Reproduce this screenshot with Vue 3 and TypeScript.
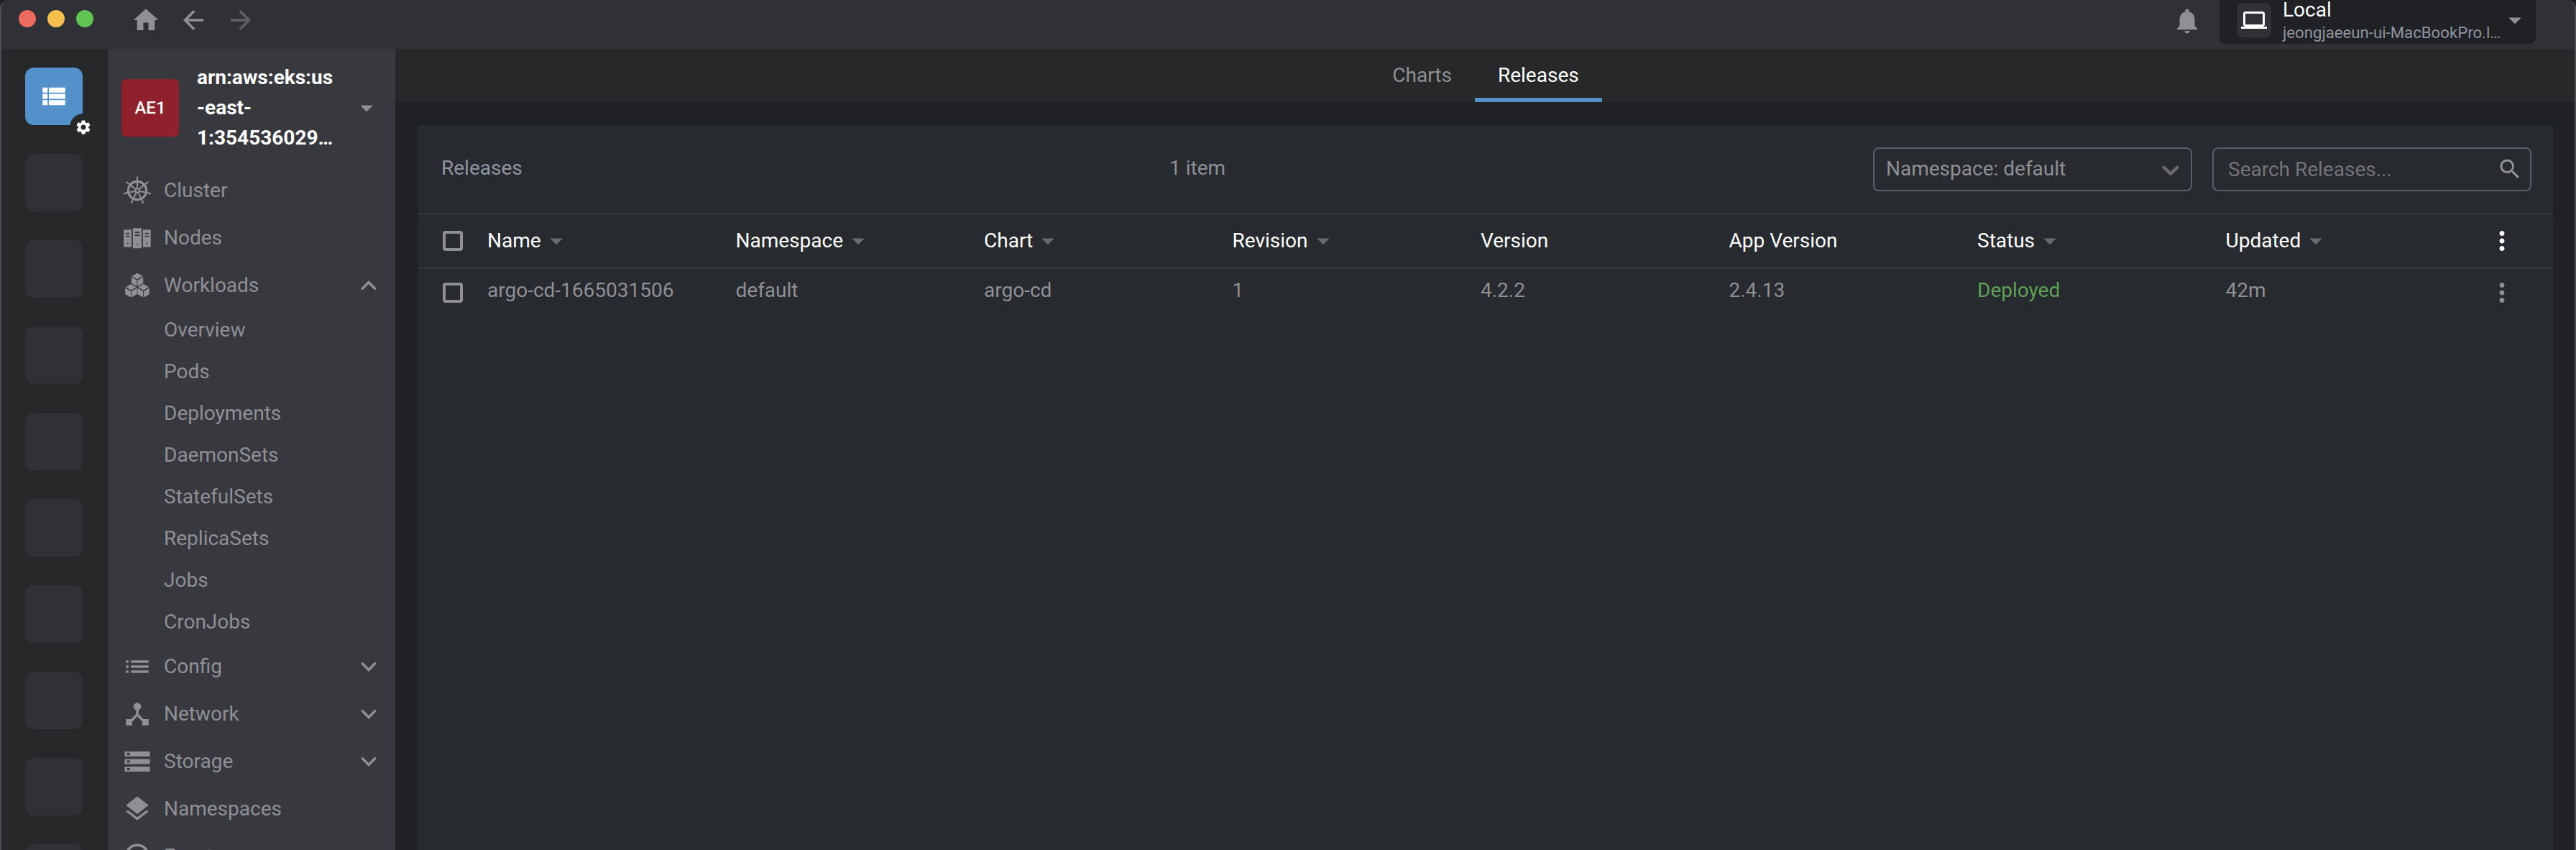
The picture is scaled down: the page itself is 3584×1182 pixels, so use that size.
<script setup lang="ts">
interface NavItem { label: string; icon: string; chevron?: 'up' | 'down'; children?: string[] }

const ICONS: Record<string, string> = {
  home: 'M10 20v-6h4v6h5v-8h3L12 3 2 12h3v8z',
  back: 'M20 11H7.83l5.59-5.59L12 4l-8 8 8 8 1.41-1.41L7.83 13H20v-2z',
  forward: 'M12 4l-1.41 1.41L16.17 11H4v2h12.17l-5.58 5.59L12 20l8-8z',
  bell: 'M12 22c1.1 0 2-.9 2-2h-4c0 1.1.89 2 2 2zm6-6v-5c0-3.07-1.64-5.64-4.5-6.32V4c0-.83-.67-1.5-1.5-1.5s-1.5.67-1.5 1.5v.68C7.63 5.36 6 7.92 6 11v5l-2 2v1h16v-1l-2-2z',
  laptop: 'M20 18c1.1 0 1.99-.9 1.99-2L22 6c0-1.1-.9-2-2-2H4c-1.1 0-2 .9-2 2v10c0 1.1.9 2 2 2H0v2h24v-2h-4zM4 6h16v10H4V6z',
  viewList: 'M3 14h4v-4H3v4zm0 5h4v-4H3v4zM3 9h4V5H3v4zm5 5h13v-4H8v4zm0 5h13v-4H8v4zM8 5v4h13V5H8z',
  gear: 'M19.14 12.94c.04-.3.06-.61.06-.94 0-.32-.02-.64-.07-.94l2.03-1.58c.18-.14.23-.41.12-.61l-1.92-3.32c-.12-.22-.37-.29-.59-.22l-2.39.96c-.5-.38-1.03-.7-1.62-.94l-.36-2.54c-.04-.24-.24-.41-.48-.41h-3.84c-.24 0-.43.17-.47.41l-.36 2.54c-.59.24-1.13.57-1.62.94l-2.39-.96c-.22-.08-.47 0-.59.22L2.74 8.87c-.12.21-.08.47.12.61l2.03 1.58c-.05.3-.09.63-.09.94s.02.64.07.94l-2.03 1.58c-.18.14-.23.41-.12.61l1.92 3.32c.12.22.37.29.59.22l2.39-.96c.5.38 1.03.7 1.62.94l.36 2.54c.05.24.24.41.48.41h3.84c.24 0 .44-.17.47-.41l.36-2.54c.59-.24 1.13-.56 1.62-.94l2.39.96c.22.08.47 0 .59-.22l1.92-3.32c.12-.22.07-.47-.12-.61l-2.01-1.58zM12 15.6c-1.98 0-3.6-1.62-3.6-3.6s1.62-3.6 3.6-3.6 3.6 1.62 3.6 3.6-1.62 3.6-3.6 3.6z',
  drop: 'M7 10l5 5 5-5z',
  up: 'M7 14.5L12 9.4l5 5.1',
  down: 'M7 9.5l5 5.1 5-5.1',
  list: 'M3 13h2v-2H3v2zm0 4h2v-2H3v2zm0-8h2V7H3v2zm4 4h14v-2H7v2zm0 4h14v-2H7v2zM7 7v2h14V7H7z',
  hub: 'M17 16l-4-4V8.82C14.16 8.4 15 7.3 15 6c0-1.66-1.34-3-3-3S9 4.34 9 6c0 1.3.84 2.4 2 2.82V12l-4 4H3v5h5v-3.05l4-4.2 4 4.2V21h5v-5h-4z',
  storage: 'M2 20h20v-4H2v4zm2-3h2v2H4v-2zM2 4v4h20V4H2zm4 3H4V5h2v2zm-4 7h20v-4H2v4zm2-3h2v2H4v-2z',
  layers: 'M11.99 18.54l-7.37-5.73L3 14.07l9 7 9-7-1.63-1.27-7.38 5.74zM12 16l7.36-5.73L21 9l-9-7-9 7 1.63 1.27L12 16z',
  clock: 'M11.99 2C6.47 2 2 6.48 2 12s4.47 10 9.99 10C17.52 22 22 17.52 22 12S17.52 2 11.99 2zM12 20c-4.42 0-8-3.58-8-8s3.58-8 8-8 8 3.58 8 8-3.58 8-8 8zm.5-13H11v6l5.25 3.15.75-1.23-4.5-2.67z',
  nodes: 'M1.2 5.4h6.2v13.7H1.2zM2.7 7.8v1.1h3.2V7.8zm0 2.3v1.1h3.2v-1.1zM4 15.6v1.2h.9v-1.2zM8.5 4.2h6.9v15.9H8.5zM10 7v1.1h3.9V7zm0 2.3v1.1h3.9V9.3zM11.5 16.4v1.1h1v-1.1zM16.5 5.4h6.2v13.7h-6.2zM18 7.8v1.1h3.2V7.8zm0 2.3v1.1h3.2v-1.1zM19.1 15.6v1.2h.9v-1.2z',
  cubes: 'M12 2.2l4.2 2.4L12 7 7.8 4.6zM7.3 5.3l4.4 2.5v4.7l-4.4-2.3zM16.7 5.3l-4.4 2.5v4.7l4.4-2.3zM7.1 10.9l4.2 2.4-4.2 2.4-4.2-2.4zM2.4 14l4.4 2.5v4.9l-4.4-2.6zM11.8 14l-4.4 2.5v4.9l4.4-2.6zM16.9 10.9l4.2 2.4-4.2 2.4-4.2-2.4zM12.2 14l4.4 2.5v4.9l-4.4-2.6zM21.6 14l-4.4 2.5v4.9l4.4-2.6z',
  search: 'M15.5 14h-.79l-.28-.27C15.41 12.59 16 11.11 16 9.5 16 5.91 13.09 3 9.5 3S3 5.91 3 9.5 5.91 16 9.5 16c1.61 0 3.09-.59 4.23-1.57l.27.28v.79l5 4.99L20.49 19l-4.99-5zm-6 0C7.01 14 5 11.99 5 9.5S7.01 5 9.5 5 14 7.01 14 9.5 11.99 14 9.5 14z',
  more: 'M12 8c1.1 0 2-.9 2-2s-.9-2-2-2-2 .9-2 2 .9 2 2 2zm0 2c-1.1 0-2 .9-2 2s.9 2 2 2 2-.9 2-2-.9-2-2-2zm0 6c-1.1 0-2 .9-2 2s.9 2 2 2 2-.9 2-2-.9-2-2-2z',
}

const SPOKES = [0, 1, 2, 3, 4, 5, 6].map((i) => (i * 360) / 7)

const nav: NavItem[] = [
  { label: 'Cluster', icon: 'wheel' },
  { label: 'Nodes', icon: 'nodes' },
  {
    label: 'Workloads', icon: 'cubes', chevron: 'up',
    children: ['Overview', 'Pods', 'Deployments', 'DaemonSets', 'StatefulSets', 'ReplicaSets', 'Jobs', 'CronJobs'],
  },
  { label: 'Config', icon: 'list', chevron: 'down' },
  { label: 'Network', icon: 'hub', chevron: 'down' },
  { label: 'Storage', icon: 'storage', chevron: 'down' },
  { label: 'Namespaces', icon: 'layers' },
  { label: 'Events', icon: 'clock' },
]

const columns = [
  { title: 'Name', value: 'argo-cd-1665031506', sortable: true },
  { title: 'Namespace', value: 'default', sortable: true },
  { title: 'Chart', value: 'argo-cd', sortable: true },
  { title: 'Revision', value: '1', sortable: true },
  { title: 'Version', value: '4.2.2', sortable: false },
  { title: 'App Version', value: '2.4.13', sortable: false },
  { title: 'Status', value: 'Deployed', sortable: true },
  { title: 'Updated', value: '42m', sortable: true },
]
</script>

<template>
  <div class="window">
    <header class="topbar">
      <div class="lights"><i class="red" /><i class="yellow" /><i class="green" /></div>
      <div class="history">
        <svg class="icon" viewBox="0 0 24 24"><path :d="ICONS.home" /></svg>
        <svg class="icon" viewBox="0 0 24 24"><path :d="ICONS.back" /></svg>
        <svg class="icon disabled" viewBox="0 0 24 24"><path :d="ICONS.forward" /></svg>
      </div>
      <svg class="icon bell" viewBox="0 0 24 24"><path :d="ICONS.bell" /></svg>
      <div class="space">
        <div class="space-icon"><svg viewBox="0 0 24 24"><path :d="ICONS.laptop" /></svg></div>
        <div class="space-text">
          <div class="space-name">Local</div>
          <div class="space-host">jeongjaeeun-ui-MacBookPro.l…</div>
        </div>
        <svg class="icon" viewBox="0 0 24 24"><path :d="ICONS.drop" /></svg>
      </div>
    </header>

    <div class="body">
      <aside class="rail">
        <div class="tile active">
          <svg class="icon" viewBox="0 0 24 24"><path :d="ICONS.viewList" /></svg>
          <span class="badge"><svg viewBox="0 0 24 24"><path :d="ICONS.gear" /></svg></span>
        </div>
        <div v-for="n in 9" :key="n" class="tile" />
      </aside>

      <nav class="sidebar">
        <div class="cluster">
          <div class="avatar">AE1</div>
          <div class="cluster-name">arn:aws:eks:us<br>-east-<br>1:354536029…</div>
          <svg class="icon" viewBox="0 0 24 24"><path :d="ICONS.drop" /></svg>
        </div>
        <template v-for="item in nav" :key="item.label">
          <div class="item">
            <svg v-if="item.icon === 'wheel'" class="icon wheel" viewBox="-12 -12 24 24">
              <circle r="7.2" stroke-width="1.8" />
              <circle r="1.6" stroke-width="1.2" />
              <path v-for="a in SPOKES" :key="a" d="M0-1.8V-11.2" stroke-width="1.2" :transform="`rotate(${a})`" />
            </svg>
            <svg v-else class="icon" viewBox="0 0 24 24"><path fill-rule="evenodd" :d="ICONS[item.icon]" /></svg>
            <span class="label">{{ item.label }}</span>
            <svg v-if="item.chevron" class="icon chevron" viewBox="0 0 24 24"><path :d="ICONS[item.chevron]" /></svg>
          </div>
          <div v-for="child in item.children" :key="child" class="sub">{{ child }}</div>
        </template>
      </nav>

      <main class="main">
        <div class="tabs">
          <div class="tab">Charts</div>
          <div class="tab current">Releases</div>
        </div>
        <section class="panel">
          <div class="toolbar">
            <span class="title">Releases</span>
            <span class="count">1 item</span>
            <div class="select">
              <span>Namespace: default</span>
              <svg viewBox="0 0 20 20"><path d="M4.516 7.548c.436-.446 1.043-.481 1.576 0L10 11.295l3.908-3.747c.533-.481 1.141-.446 1.574 0 .436.445.408 1.197 0 1.615-.406.418-4.695 4.502-4.695 4.502-.217.223-.502.335-.787.335s-.57-.112-.789-.335c0 0-4.287-4.084-4.695-4.502s-.436-1.17 0-1.615z" /></svg>
            </div>
            <div class="search">
              <span>Search Releases...</span>
              <svg viewBox="0 0 24 24"><path :d="ICONS.search" /></svg>
            </div>
          </div>
          <div class="row head">
            <i class="check" />
            <div v-for="c in columns" :key="c.title" class="cell">
              {{ c.title }}<svg v-if="c.sortable" class="icon sort" viewBox="0 0 24 24"><path :d="ICONS.drop" /></svg>
            </div>
            <svg class="icon more" viewBox="0 0 24 24"><path :d="ICONS.more" /></svg>
          </div>
          <div class="row">
            <i class="check" />
            <div v-for="c in columns" :key="c.title" class="cell value" :class="{ ok: c.title === 'Status' }">{{ c.value }}</div>
            <svg class="icon more" viewBox="0 0 24 24"><path :d="ICONS.more" /></svg>
          </div>
        </section>
      </main>
    </div>
  </div>
</template>

<style>
body { background: #202124; overflow: hidden; }
</style>

<style scoped>
* { box-sizing: border-box; }
.window {
  width: 3584px; height: 1182px; overflow: hidden;
  display: flex; flex-direction: column;
  border-left: 2px solid #4d4e51; border-right: 2px solid #4d4e51;
  border-radius: 12px 12px 0 0;
  background: #202124; color: #8e9095;
  font: 28px/42px Roboto, sans-serif;
}
svg { display: block; flex: none; fill: currentColor; }
.icon { width: 42px; height: 42px; }

.topbar { height: 68px; flex: none; display: flex; align-items: flex-start; background: #303136; }
.lights { display: flex; gap: 16px; padding: 14px 0 0 24px; }
.lights i { width: 24px; height: 24px; border-radius: 50%; }
.red { background: #ec6a5e; }
.yellow { background: #f4bf4f; }
.green { background: #61c554; }
.history { display: flex; gap: 24px; margin: 7px 0 0 52px; }
.disabled { opacity: .5; }
.bell { margin: 8px 24px 0 auto; }
.space {
  width: 440px; height: 61px; margin-right: 54px; padding-left: 24px;
  display: flex; background: #202124; border-radius: 0 0 8px 8px;
}
.space-icon { width: 48px; height: 48px; margin-top: 4px; border-radius: 8px; background: #303136; color: #fff; display: flex; align-items: center; justify-content: center; }
.space-icon svg { width: 36px; height: 36px; }
.space-text { width: 302px; margin-left: 16px; white-space: nowrap; }
.space-name { color: #fff; line-height: 28px; height: 28px; }
.space-host { color: #8f95a0; font-size: 22.2px; line-height: 26px; margin-top: 4px; }
.space .icon { margin: 7px 0 0 0; }

.body { flex: 1; min-height: 0; display: flex; }
.rail { width: 148px; flex: none; padding: 26px 0 0 33px; background: #262829; display: flex; flex-direction: column; gap: 40px; }
.tile { width: 80px; height: 80px; flex: none; border-radius: 12px; background: #303136; }
.tile.active { position: relative; background: #5490ca; color: #fff; display: flex; align-items: center; justify-content: center; }
.badge { position: absolute; left: 62px; top: 64px; width: 38px; height: 38px; border-radius: 50%; background: #262829; display: flex; align-items: center; justify-content: center; }
.badge svg { width: 24px; height: 24px; }

.sidebar { width: 400px; flex: none; background: #38393e; }
.cluster { height: 164px; display: flex; align-items: center; padding: 0 19px; }
.avatar { width: 80px; height: 80px; border-radius: 6px; background: #8e212b; color: #fff; font-size: 24px; line-height: 80px; text-align: center; font-weight: 500; }
.cluster-name { width: 215px; margin-left: 25px; color: #fff; font-weight: 700; white-space: nowrap; }
.item { height: 66px; padding-left: 20px; display: flex; align-items: center; }
.label { width: 264px; margin-left: 16px; }
.sub { height: 58px; line-height: 58px; padding-left: 78px; }
.wheel { fill: none; stroke: currentColor; }
.chevron { fill: none; stroke: currentColor; stroke-width: 2; stroke-linecap: round; }

.main { flex: 1; min-width: 0; display: flex; flex-direction: column; }
.tabs { height: 74px; flex: none; display: flex; justify-content: center; padding-left: 2px; background: #262829; }
.tab { padding: 16px 32px 0; height: 74px; }
.current { color: #fff; border-bottom: 6px solid #5490ca; }
.panel { flex: 1; margin: 32px 30px 0 32px; background: #272a2e; }
.toolbar { height: 122px; display: flex; align-items: center; padding: 1px 30px 0 32px; }
.title { width: 1013px; color: #8f95a0; padding-bottom: 3px; }
.count { flex: 1; padding-bottom: 3px; }
.select, .search { width: 444px; height: 61px; border: 2px solid #5a5d68; border-radius: 8px; display: flex; align-items: center; justify-content: space-between; }
.select { padding: 0 8px 0 16px; margin-right: 28px; }
.select span { padding-bottom: 2px; }
.select svg { width: 40px; height: 40px; color: #696a6e; }
.search { padding: 0 10px 0 20px; }
.search span { color: #737478; }
.search svg { width: 36px; height: 36px; margin-top: -2px; }
.row { height: 66px; display: flex; align-items: center; padding: 0 50px 0 34px; }
.head { height: 78px; border-top: 2px solid #36393e; border-bottom: 2px solid #36393e; color: #fff; }
.check { width: 28px; height: 28px; flex: none; border: 4px solid #8e9095; border-radius: 4px; margin-right: 34px; }
.cell { width: 345.5px; flex: none; display: flex; align-items: center; }
.value { padding-bottom: 6px; }
.sort { color: #696b6e; }
.more { margin-left: auto; }
.ok { color: #5f9f57; }
</style>
